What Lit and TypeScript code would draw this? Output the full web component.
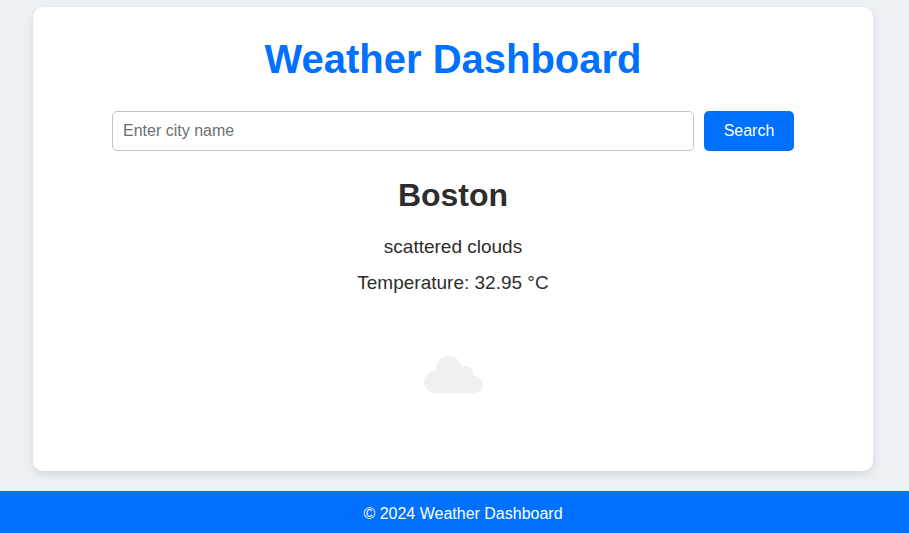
import { LitElement, html, css } from "lit";
import { customElement, state } from "lit/decorators.js";

interface Weather {
  city: string;
  description: string;
  temperature: number;
}

@customElement("app-root")
export class AppRoot extends LitElement {
  @state() private weather: Weather = {
    city: "Boston",
    description: "scattered clouds",
    temperature: 32.95,
  };

  static styles = css`
    :host {
      display: flex;
      flex-direction: column;
      min-height: 100vh;
      box-sizing: border-box;
      padding-top: 7px;
      background: #edf0f5;
      color: #2d2d2d;
      font-family: Arial, "Liberation Sans", sans-serif;
      font-size: 16px;
    }
    .card {
      box-sizing: border-box;
      width: calc(100% - 66px);
      max-width: 840px;
      margin: 0 auto 20px;
      padding: 29px 20px 44px;
      border-radius: 10px;
      background: #ffffff;
      box-shadow: 0 4px 8px rgba(0, 0, 0, 0.1);
      text-align: center;
    }
    .shell {
      padding-right: 3px;
      display: flex;
      flex: 1;
    }
    .title {
      margin: 0 0 29px;
      color: #0070ff;
      font-size: 40px;
      line-height: 46px;
    }
    .search {
      display: flex;
      gap: 10px;
      max-width: 682px;
      margin: 0 auto 25px;
    }
    .field {
      flex: 1;
      min-width: 0;
      box-sizing: border-box;
      height: 40px;
      padding: 10px;
      border: 1px solid #c4c4c4;
      border-radius: 5px;
      background: #ffffff;
      color: inherit;
      font: inherit;
    }
    .field::placeholder {
      color: #6e6e6e;
    }
    .submit {
      width: 90px;
      height: 40px;
      padding: 0;
      border: 0;
      border-radius: 5px;
      background: #0070ff;
      color: #ffffff;
      font: inherit;
      cursor: pointer;
    }
    .city {
      margin: 0 0 22px;
      font-size: 32px;
      line-height: 38px;
    }
    .detail {
      margin: 0 0 14px;
      font-size: 19px;
      line-height: 22px;
    }
    .icon {
      display: block;
      width: 100px;
      height: 100px;
      margin: 31px auto 0;
      fill: #f0f0ef;
    }
    .footer {
      padding: 14px 0 10px 17px;
      background: #0070ff;
      color: #ffffff;
      line-height: 18px;
      text-align: center;
    }
  `;

  private onSubmit(event: Event) {
    event.preventDefault();
  }

  render() {
    const { city, description, temperature } = this.weather;
    return html`
      <div class="shell">
        <main class="card">
          <h1 class="title">Weather Dashboard</h1>
          <form class="search" @submit=${this.onSubmit}>
            <input
              class="field"
              type="text"
              name="city"
              aria-label="Enter city name"
              placeholder="Enter city name"
            />
            <button class="submit" type="submit">Search</button>
          </form>
          <section>
            <h2 class="city">${city}</h2>
            <p class="detail">${description}</p>
            <p class="detail">Temperature: ${temperature} °C</p>
            <svg class="icon" viewBox="0 0 100 100" role="img" aria-label=${description}>
              <circle cx="32" cy="57" r="11" />
              <circle cx="45.8" cy="43.4" r="12.5" />
              <circle cx="62.3" cy="48.8" r="8" />
              <circle cx="71.3" cy="59.3" r="8.7" />
              <path d="M32 68V50H62L70 53V60L71.3 68Z" />
            </svg>
          </section>
        </main>
      </div>
      <footer class="footer">© 2024 Weather Dashboard</footer>
    `;
  }
}
